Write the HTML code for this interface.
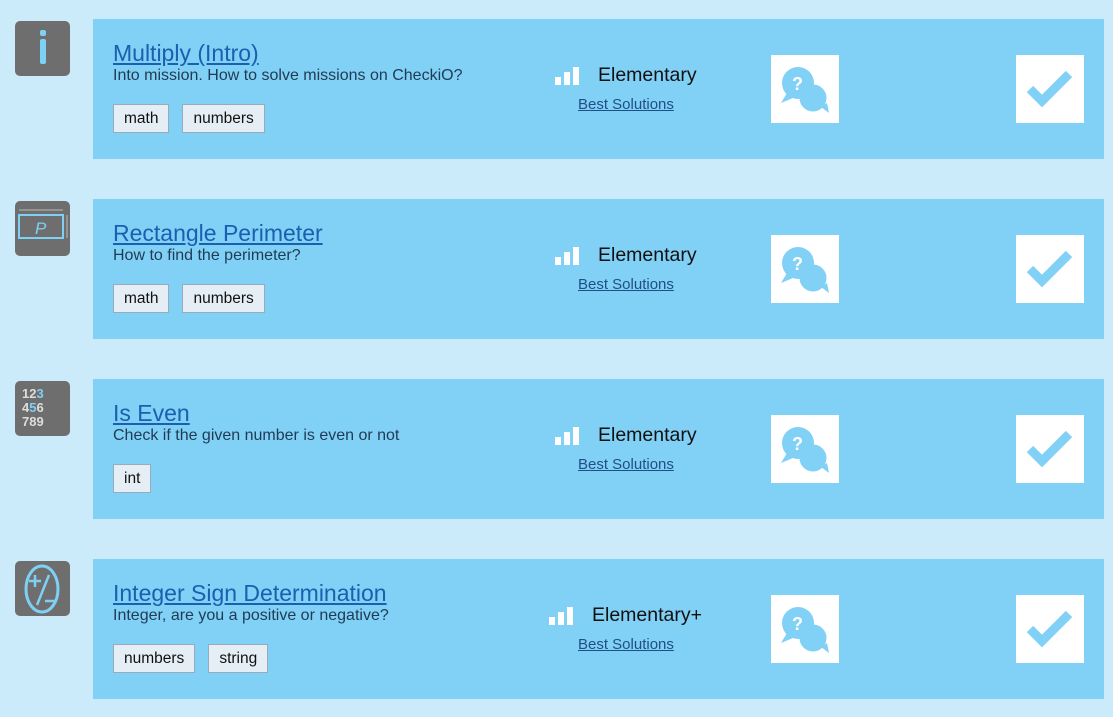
<!DOCTYPE html>
<html><head><style>
body{margin:0;width:1113px;height:717px;background:#cbebfb;font-family:"Liberation Sans",sans-serif;position:relative;overflow:hidden}
.ic{position:absolute;left:15px;width:55px;height:55px;background:#6e6e6e;border-radius:5px}
.card{position:absolute;left:93px;width:1011px;height:140px;background:#81d0f5}
.t{position:absolute;left:20px;top:21px;font-size:23px;color:#1a5fb0;text-decoration:underline}
.d{position:absolute;left:20px;top:48px;font-size:16px;color:#1f3b55}
.tags{position:absolute;left:20px;top:85px;display:flex;gap:13px}
.tag{height:27px;line-height:27px;padding:0 10px;background:#e6eef5;border:1px solid #9ab;font-size:15.5px;color:#111}
.lv{position:absolute;top:45px;font-size:19.5px;color:#111;display:flex;align-items:center}
.bars{display:flex;align-items:flex-end;gap:3px;margin-right:19px}
.bars i{display:block;width:6px;background:#fff}
.bs{position:absolute;left:485px;top:77px;font-size:15px;color:#1f4f86;text-decoration:underline}
.box{position:absolute;top:36px;width:68px;height:68px;background:#fff}
</style></head><body>

<div class="ic" style="top:21px"><svg width="55" height="55"><rect x="25" y="9" width="6" height="6" rx="2" fill="#7fd0f5"/><rect x="25" y="18" width="6" height="25" rx="2" fill="#7fd0f5"/></svg></div>
<div class="ic" style="top:201px"><svg width="55" height="55"><rect x="4" y="14" width="44" height="23" fill="none" stroke="#7fd0f5" stroke-width="2"/><line x1="4" y1="9" x2="48" y2="9" stroke="#bbb"/><line x1="52" y1="14" x2="52" y2="37" stroke="#bbb"/><text x="20" y="33" font-size="17" font-style="italic" fill="#7fd0f5" font-family="Liberation Sans">P</text></svg></div>
<div class="ic" style="top:381px"><svg width="55" height="55" font-family="Liberation Sans" font-weight="bold" font-size="13"><text x="7" y="17" fill="#ddd">12<tspan fill="#7fd0f5">3</tspan></text><text x="7" y="31" fill="#ddd">4<tspan fill="#7fd0f5">5</tspan>6</text><text x="7" y="45" fill="#ddd">789</text></svg></div>
<div class="ic" style="top:561px"><svg width="55" height="55"><ellipse cx="27" cy="28" rx="16" ry="23" fill="none" stroke="#7fd0f5" stroke-width="3"/><path d="M14 20h12M20 14v12M22 44L34 14M30 40h12" stroke="#7fd0f5" stroke-width="2.5"/></svg></div>

<div class="card" style="top:19px"><a class="t">Multiply (Intro)</a><div class="d">Into mission. How to solve missions on CheckiO?</div><div class="tags"><span class="tag">math</span><span class="tag">numbers</span></div>
<div class="lv" style="left:462px"><span class="bars"><i style="height:8px"></i><i style="height:13px"></i><i style="height:18px"></i></span>Elementary</div><span class="bs">Best Solutions</span>
<div class="box" style="left:678px"><svg width="68" height="68"><circle cx="42" cy="43" r="15" fill="#81d0f5" stroke="#fff" stroke-width="3"/><path d="M50 52l8 6-2-10z" fill="#81d0f5"/><circle cx="27" cy="28" r="16" fill="#81d0f5"/><path d="M16 38l-6 10 12-5z" fill="#81d0f5"/><text x="21" y="35" font-size="18" font-weight="bold" fill="#fff" font-family="Liberation Sans">?</text></svg></div>
<div class="box" style="left:923px"><svg width="68" height="68"><path d="M14 34l12 12 27-27" fill="none" stroke="#81d0f5" stroke-width="9"/></svg></div></div>

<div class="card" style="top:199px"><a class="t">Rectangle Perimeter</a><div class="d">How to find the perimeter?</div><div class="tags"><span class="tag">math</span><span class="tag">numbers</span></div>
<div class="lv" style="left:462px"><span class="bars"><i style="height:8px"></i><i style="height:13px"></i><i style="height:18px"></i></span>Elementary</div><span class="bs">Best Solutions</span>
<div class="box" style="left:678px"><svg width="68" height="68"><circle cx="42" cy="43" r="15" fill="#81d0f5" stroke="#fff" stroke-width="3"/><path d="M50 52l8 6-2-10z" fill="#81d0f5"/><circle cx="27" cy="28" r="16" fill="#81d0f5"/><path d="M16 38l-6 10 12-5z" fill="#81d0f5"/><text x="21" y="35" font-size="18" font-weight="bold" fill="#fff" font-family="Liberation Sans">?</text></svg></div>
<div class="box" style="left:923px"><svg width="68" height="68"><path d="M14 34l12 12 27-27" fill="none" stroke="#81d0f5" stroke-width="9"/></svg></div></div>

<div class="card" style="top:379px"><a class="t">Is Even</a><div class="d">Check if the given number is even or not</div><div class="tags"><span class="tag">int</span></div>
<div class="lv" style="left:462px"><span class="bars"><i style="height:8px"></i><i style="height:13px"></i><i style="height:18px"></i></span>Elementary</div><span class="bs">Best Solutions</span>
<div class="box" style="left:678px"><svg width="68" height="68"><circle cx="42" cy="43" r="15" fill="#81d0f5" stroke="#fff" stroke-width="3"/><path d="M50 52l8 6-2-10z" fill="#81d0f5"/><circle cx="27" cy="28" r="16" fill="#81d0f5"/><path d="M16 38l-6 10 12-5z" fill="#81d0f5"/><text x="21" y="35" font-size="18" font-weight="bold" fill="#fff" font-family="Liberation Sans">?</text></svg></div>
<div class="box" style="left:923px"><svg width="68" height="68"><path d="M14 34l12 12 27-27" fill="none" stroke="#81d0f5" stroke-width="9"/></svg></div></div>

<div class="card" style="top:559px"><a class="t">Integer Sign Determination</a><div class="d">Integer, are you a positive or negative?</div><div class="tags"><span class="tag">numbers</span><span class="tag">string</span></div>
<div class="lv" style="left:456px"><span class="bars"><i style="height:8px"></i><i style="height:13px"></i><i style="height:18px"></i></span>Elementary+</div><span class="bs">Best Solutions</span>
<div class="box" style="left:678px"><svg width="68" height="68"><circle cx="42" cy="43" r="15" fill="#81d0f5" stroke="#fff" stroke-width="3"/><path d="M50 52l8 6-2-10z" fill="#81d0f5"/><circle cx="27" cy="28" r="16" fill="#81d0f5"/><path d="M16 38l-6 10 12-5z" fill="#81d0f5"/><text x="21" y="35" font-size="18" font-weight="bold" fill="#fff" font-family="Liberation Sans">?</text></svg></div>
<div class="box" style="left:923px"><svg width="68" height="68"><path d="M14 34l12 12 27-27" fill="none" stroke="#81d0f5" stroke-width="9"/></svg></div></div>
</body></html>
